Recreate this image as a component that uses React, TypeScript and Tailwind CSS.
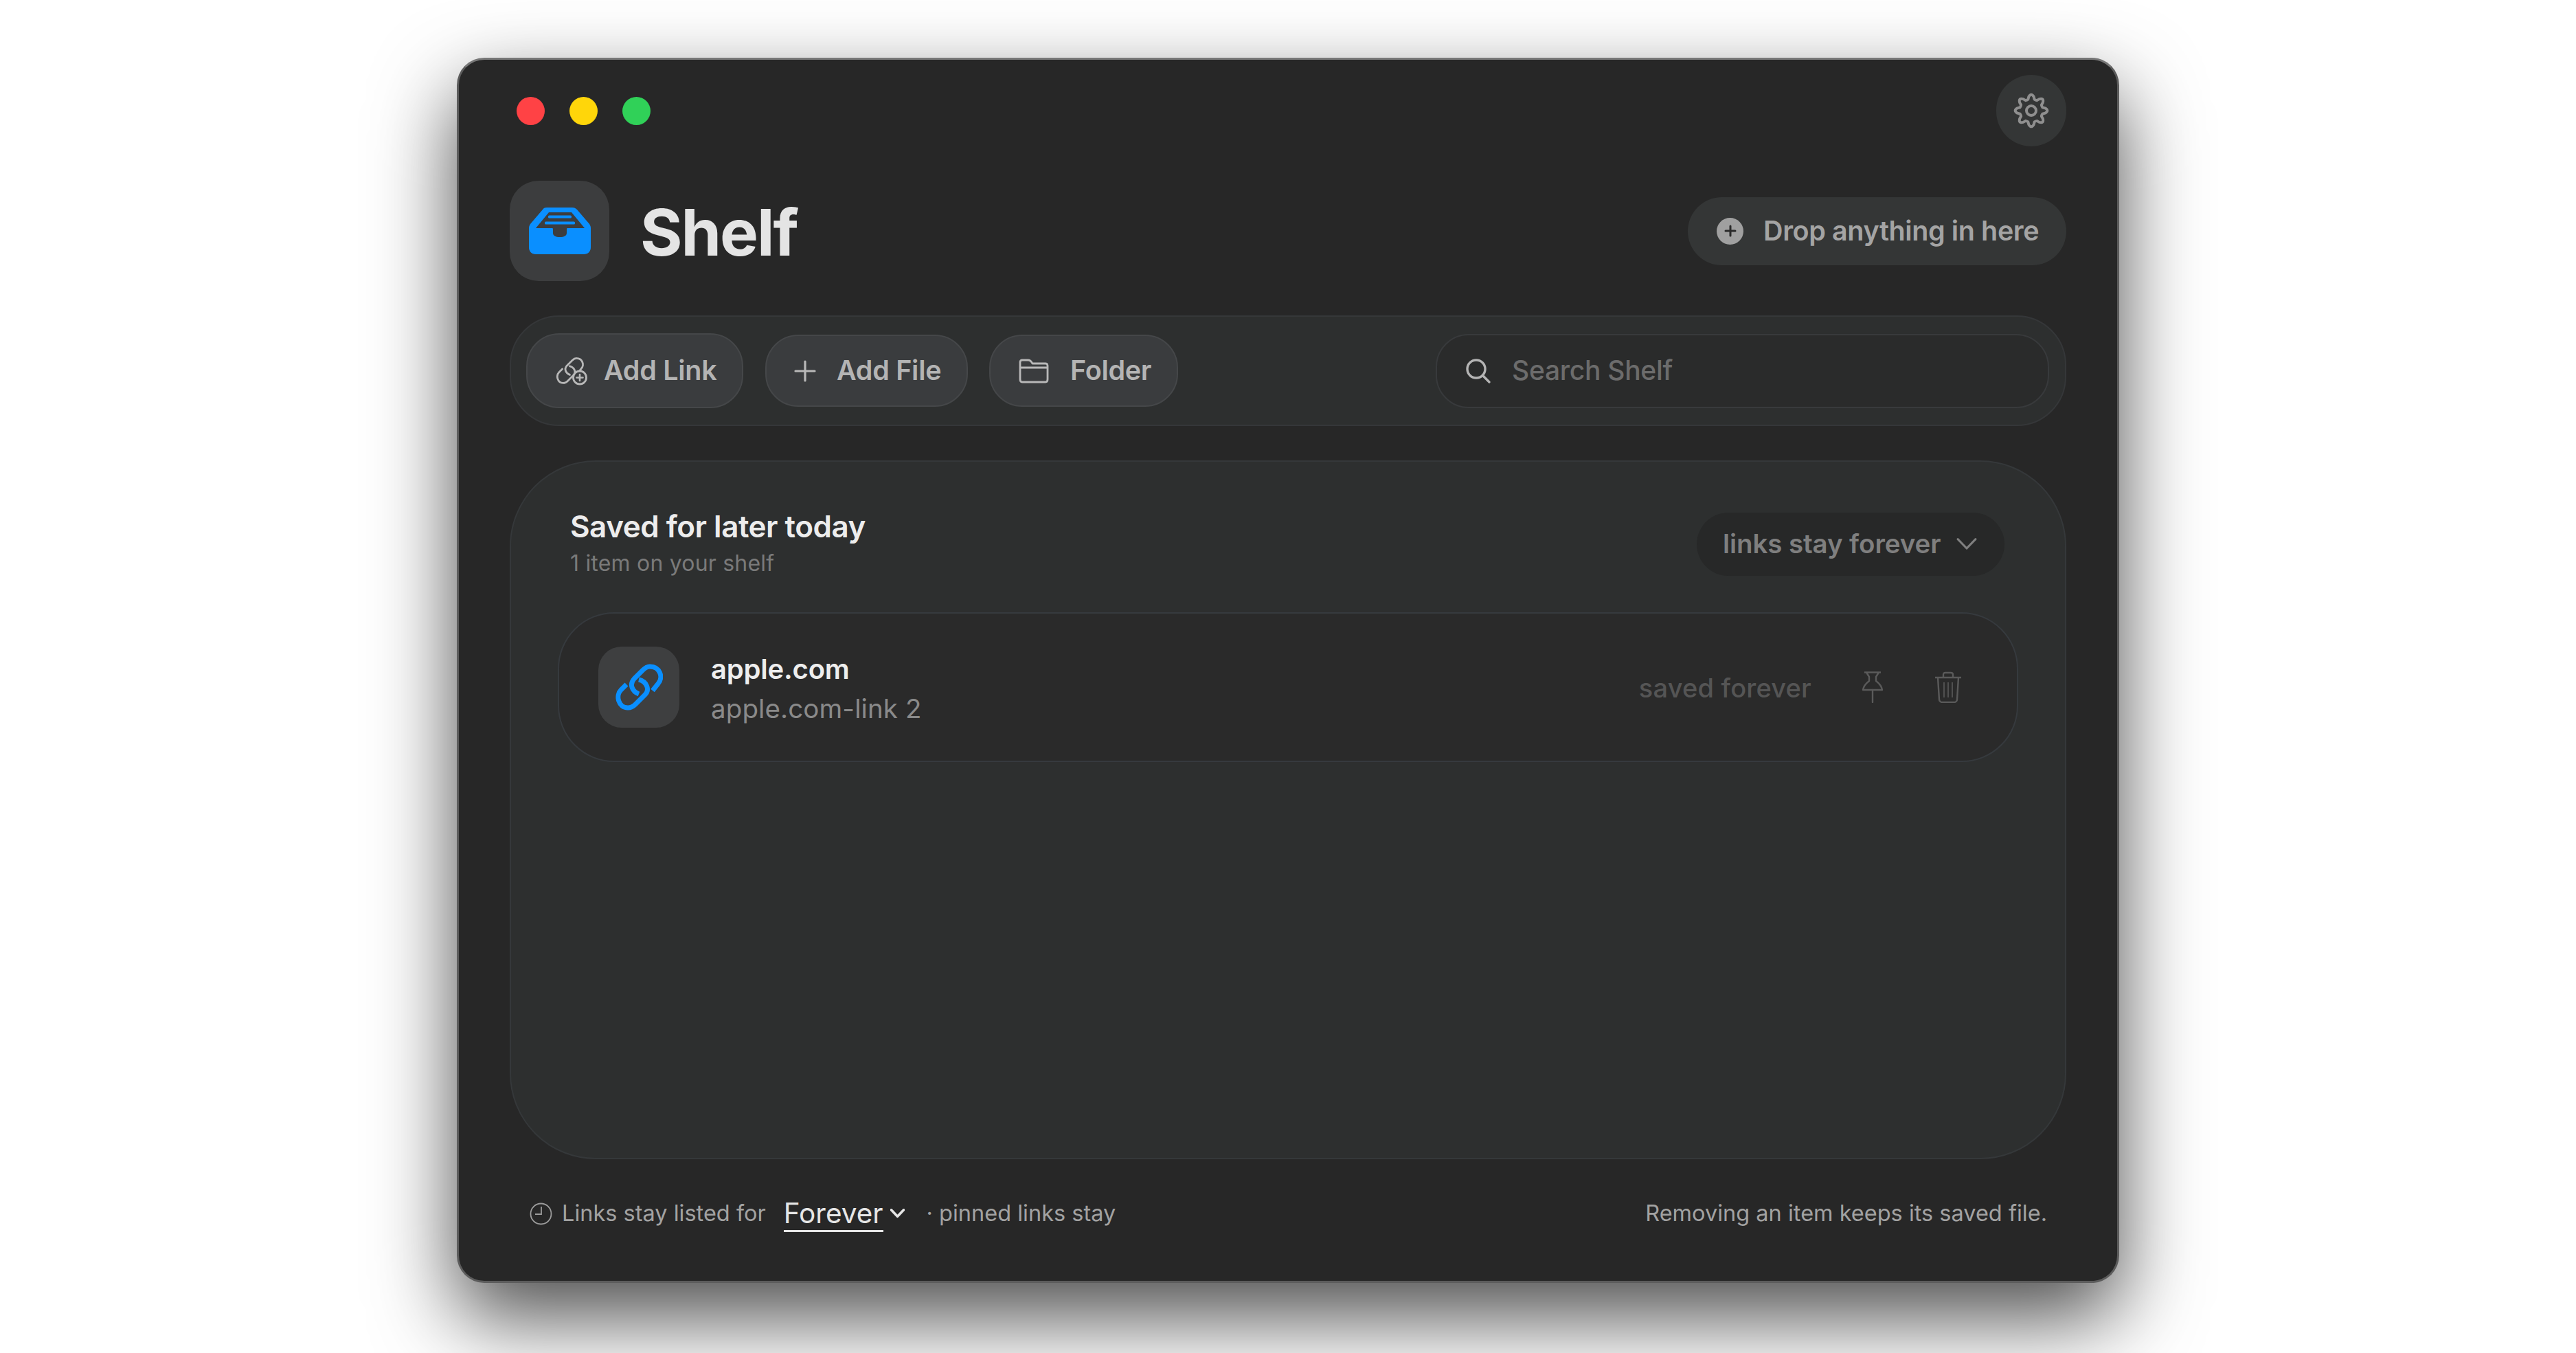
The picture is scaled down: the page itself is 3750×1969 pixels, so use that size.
const font = "font-['Inter','Liberation_Sans',sans-serif]";

// eight rounded teeth, same outline as the reference gear
function gearPath() {
  const cx = 25;
  const cy = 25;
  const parts: string[] = [];
  for (let i = 0; i < 8; i++) {
    const a = (i * Math.PI) / 4 - Math.PI / 2;
    const p = (r: number, off: number) =>
      `${(cx + r * Math.cos(a + off)).toFixed(2)} ${(cy + r * Math.sin(a + off)).toFixed(2)}`;
    parts.push(
      `${i === 0 ? "M" : "L"}${p(17, -0.28)} L${p(20.5, -0.18)} Q${p(26.5, 0)} ${p(20.5, 0.18)} L${p(17, 0.28)} Q${p(16.4, 0.39)} ${p(17, 0.505)}`
    );
  }
  return parts.join(" ") + " Z";
}

const chainTop = "M54 39L62 29C70 20 65 4 50 4C46 4 43 6 40 9L27 22C20 30 24 40 34 44";
const chainBottom = "M16 30L8 38C0 46 4 64 18 64C23 64 26 62 29 59L43 45C50 38 46 26 34 23";

function TrayIcon() {
  return (
    <svg width="90" height="68" viewBox="0 0 90 68">
      <path
        fill="#0a8fff"
        fillRule="evenodd"
        d="M26 0H63C66 0 68 1 70 3L88 24C89 26 90 27 90 30V58C90 64 86 68 80 68H10C4 68 0 64 0 58V30C0 27 1 26 2 24L20 3C21 1 23 0 26 0ZM29 7L10 30H34C35 30 35 31 35 32V37C35 41 39 43 45 43C51 43 55 41 55 37V32C55 31 55 30 56 30H81L62 7Z"
      />
      <rect x="28" y="11.5" width="34" height="4" rx="1.5" fill="#0a8fff" />
      <rect x="23" y="20.5" width="44" height="4" rx="1.5" fill="#0a8fff" />
    </svg>
  );
}

function ChainIcon() {
  return (
    <svg width="69" height="68" viewBox="0 0 69 68" fill="none" stroke="#0a8fff" strokeWidth="7">
      <path d={chainTop} />
      <path d={chainBottom} />
    </svg>
  );
}

function AddLinkIcon() {
  return (
    <svg width="46" height="42" viewBox="0 0 46 42" fill="none" stroke="#b8b8b8" strokeLinecap="round">
      <g transform="scale(0.6)" strokeWidth="4.6">
        <path d={chainTop} />
        <path d={chainBottom} />
      </g>
      <circle cx="35" cy="30.5" r="9.5" strokeWidth="2.8" fill="#3a3c3e" />
      <path d="M35 26V35M30.5 30.5H39.5" strokeWidth="2.6" />
    </svg>
  );
}

function PlusIcon() {
  return (
    <svg width="32" height="32" viewBox="0 0 32 32" fill="none" stroke="#b8b8b8" strokeWidth="3.2" strokeLinecap="round">
      <path d="M16 2V30M2 16H30" />
    </svg>
  );
}

function FolderIcon() {
  return (
    <svg width="44" height="36" viewBox="0 0 44 36" fill="none" stroke="#b8b8b8" strokeWidth="2.8" strokeLinejoin="round">
      <path d="M2 30V5C2 3 3 2 5 2H14C16 2 17 3 18 4L20 7H39C41 7 42 8 42 10V30C42 33 41 34 39 34H5C3 34 2 33 2 30Z" />
      <path d="M2 13H42" />
    </svg>
  );
}

function SearchIcon() {
  return (
    <svg width="38" height="38" viewBox="0 0 38 38" fill="none" stroke="#b4b4b4" strokeWidth="3.4" strokeLinecap="round">
      <circle cx="16" cy="16" r="13" />
      <path d="M25.5 25.5L35 35" />
    </svg>
  );
}

function GearIcon() {
  return (
    <svg width="56" height="56" viewBox="-3 -3 56 56" fill="none" stroke="#8f8f8f" strokeWidth="4" strokeLinejoin="round">
      <path d={gearPath()} />
      <circle cx="25" cy="25" r="7" />
    </svg>
  );
}

function Chevron({ w, color, sw }: { w: number; color: string; sw: number }) {
  return (
    <svg width={w} height={w * 0.62} viewBox="0 0 29 18" fill="none" stroke={color} strokeWidth={sw} strokeLinecap="round" strokeLinejoin="round">
      <path d="M2 2.5L14.5 15.5L27 2.5" />
    </svg>
  );
}

function PinIcon() {
  return (
    <svg width="32" height="46" viewBox="0 0 32 46" fill="none" stroke="#5a5a5a" strokeWidth="2.4" strokeLinejoin="round">
      <path d="M4 1.5H28M7 1.5L11 8V14C7 17 3 21 2 27H30C29 21 25 17 21 14V8L25 1.5" />
      <path d="M16 27V45" strokeLinecap="round" />
    </svg>
  );
}

function TrashIcon() {
  return (
    <svg width="40" height="46" viewBox="0 0 40 46" fill="none" stroke="#5a5a5a" strokeWidth="2.4" strokeLinejoin="round">
      <path d="M1 9H39M13 9V5C13 3 14 2 16 2H24C26 2 27 3 27 5V9" />
      <path d="M5 9L7 41C7 43 9 45 11 45H29C31 45 33 43 33 41L35 9" />
      <path d="M14 16V38M20 16V38M26 16V38" strokeWidth="1.6" />
    </svg>
  );
}

function ClockIcon() {
  return (
    <svg width="33" height="33" viewBox="0 0 33 33" fill="none" stroke="#9c9c9c" strokeWidth="1.8">
      <circle cx="16.5" cy="16.5" r="15" />
      <path d="M17 6V17H8" />
    </svg>
  );
}

function ToolButton({ icon, label, cls }: { icon: React.ReactNode; label: string; cls: string }) {
  return (
    <button className={`flex items-center bg-[#3a3c3e] border-2 border-[#454749] rounded-[48px] text-[39.5px] font-semibold text-[#b4b4b4] tracking-[-0.3px] ${cls}`}>
      {icon}
      <span>{label}</span>
    </button>
  );
}

export default function App() {
  return (
    <div className={`w-[3750px] h-[1969px] bg-white flex justify-center pt-[84px] overflow-hidden ${font}`}>
      <div className="w-[2420px] h-[1783px] rounded-[40px] bg-[#272727] border-[3px] border-[#5c5c5c] border-t-[#777777] shadow-[0_50px_120px_rgba(0,0,0,0.7)] px-[74px] flex flex-col">
        {/* title bar */}
        <div className="flex items-center justify-between pt-[22px] pl-[10px]">
          <div className="flex gap-[36px]">
            <div className="w-[41px] h-[41px] rounded-full bg-[#ff4245]" />
            <div className="w-[41px] h-[41px] rounded-full bg-[#ffd60a]" />
            <div className="w-[41px] h-[41px] rounded-full bg-[#30d158]" />
          </div>
          <div className="w-[102px] h-[104px] rounded-full bg-[#343636] flex items-center justify-center">
            <GearIcon />
          </div>
        </div>

        {/* brand row */}
        <div className="flex items-center justify-between mt-[50px]">
          <div className="flex items-center gap-[45px]">
            <div className="w-[145px] h-[146px] rounded-[42px] bg-[#3c3d3e] flex items-center justify-center">
              <TrayIcon />
            </div>
            <span className="text-[94px] font-bold text-[#e4e4e4] tracking-[-2px] leading-none mt-[3px]">Shelf</span>
          </div>
          <div className="flex items-center h-[99px] w-[551px] pl-[42px] rounded-full bg-[#343636] text-[39.5px] font-semibold text-[#a4a4a4]">
            <div className="relative w-[39px] h-[39px] rounded-full bg-[#a0a0a0] mr-[29px] flex items-center justify-center">
              <svg width="20" height="20" viewBox="0 0 20 20" stroke="#2b2b2b" strokeWidth="3" strokeLinecap="round">
                <path d="M10 3V17M3 10H17" />
              </svg>
            </div>
            <span className="tracking-[-0.4px] mt-[2px]">Drop anything in here</span>
          </div>
        </div>

        {/* toolbar */}
        <div className="flex items-center h-[161px] mt-[50px] pl-[22px] pr-[23px] rounded-[72px] bg-[#2d2f2f] border-2 border-[#353739]">
          <ToolButton icon={<span className="mr-[24px]"><AddLinkIcon /></span>} label="Add Link" cls="h-[109px] w-[316px] pl-[41px]" />
          <ToolButton icon={<span className="mr-[30px]"><PlusIcon /></span>} label="Add File" cls="h-[105px] w-[295px] ml-[32px] pl-[40px]" />
          <ToolButton icon={<span className="mr-[31px]"><FolderIcon /></span>} label="Folder" cls="h-[105px] w-[275px] ml-[31px] pl-[41px]" />
          <div className="flex items-center h-[108px] w-[893px] ml-auto pl-[41px] rounded-[48px] bg-[#2a2b2b] border-2 border-[#383a3c]">
            <SearchIcon />
            <span className="ml-[30px] text-[39px] font-medium text-[#6c6c6c] tracking-[-0.3px]">Search Shelf</span>
          </div>
        </div>

        {/* list card */}
        <div className="h-[1017px] mt-[50px] rounded-[125px] bg-[#2d2f2f] border-2 border-[#35383a] px-[68px] pt-[68px]">
          <div className="flex items-center justify-between pl-[18px] pr-[20px]">
            <div className="flex flex-col">
              <span className="text-[44px] leading-[52px] font-semibold text-[#ededed] tracking-[-0.5px]">Saved for later today</span>
              <span className="text-[32px] leading-[40px] mt-[8px] text-[#7a7a7a] tracking-[0.2px]">1 item on your shelf</span>
            </div>
            <div className="flex items-center h-[92px] w-[448px] mt-[3px] pl-[38px] rounded-full bg-[#272828] text-[38.5px] font-semibold text-[#7f7f7f]">
              <span className="tracking-[-0.1px]">links stay forever</span>
              <span className="ml-[23px]"><Chevron w={30} color="#7f7f7f" sw={3} /></span>
            </div>
          </div>

          <div className="flex items-center h-[218px] mt-[51px] pl-[57px] pr-[80px] rounded-[82px] bg-[#2a2a2a] border-2 border-[#363a3e]">
            <div className="w-[118px] h-[118px] rounded-[34px] bg-[#3e3f40] flex items-center justify-center">
              <ChainIcon />
            </div>
            <div className="flex flex-col ml-[46px] mt-[4px]">
              <span className="text-[40px] leading-[48px] font-semibold text-[#eeeeee] tracking-[-0.2px]">apple.com</span>
              <span className="text-[38.5px] leading-[46px] mt-[10px] text-[#8a8a8a] tracking-[0.1px]">apple.com-link 2</span>
            </div>
            <span className="ml-auto text-[38px] font-medium text-[#555555] tracking-[0.2px] mt-[2px]">saved forever</span>
            <span className="ml-[73px]"><PinIcon /></span>
            <span className="ml-[74px]"><TrashIcon /></span>
          </div>
        </div>

        {/* footer */}
        <div className="flex items-center justify-between mt-[52px] pl-[29px] pr-[28px] text-[32.5px] text-[#a2a2a2]">
          <div className="flex items-center">
            <ClockIcon />
            <span className="ml-[14px]">Links stay listed for</span>
            <span className="ml-[26px] mt-[3px] text-[40.5px] leading-[48px] text-[#e6e6e6] border-b-[3px] border-[#e6e6e6]">Forever</span>
            <span className="ml-[10px]"><Chevron w={21} color="#e6e6e6" sw={5} /></span>
            <span className="ml-[32px]">· pinned links stay</span>
          </div>
          <span>Removing an item keeps its saved file.</span>
        </div>
      </div>
    </div>
  );
}
